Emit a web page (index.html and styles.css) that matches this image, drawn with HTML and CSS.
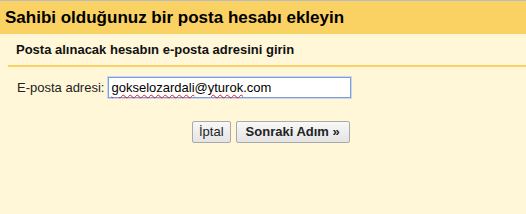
FILE: index.html
```html
<!DOCTYPE html>
<html>
<head>
<meta http-equiv="Content-Type" content="text/html; charset=utf-8" />
<title>Posta hesabı ekle</title>
<link rel="stylesheet" href="styles.css">
</head>
<body>
 <div class="dialog">
  <div class="title">Sahibi olduğunuz bir posta hesabı ekleyin</div>
  <div class="content">
   <div class="subtitle">Posta alınacak hesabın e-posta adresini girin</div>
   <div class="field">
    <span class="label">E-posta adresi:</span>
    <div class="email"><span class="typo">gokselozardali</span>@<span class="typo">yturok</span>.com</div>
   </div>
   <div class="actions">
    <span class="btn">İptal</span>
    <span class="btn primary">Sonraki Adım »</span>
   </div>
  </div>
 </div>
</body>
</html>
```

FILE: styles.css
```css
*{
	margin:0;
	padding:0;
	}
body{
	font-family: "Liberation Sans", Arial, sans-serif;
	font-size: 13px;
	color: #222;
	background: #fff7d7;
	}
.dialog{
	width: 526px;
	height: 214px;
	border-top: 1px solid #b9bcc6;
	background: #fff7d7;
	}
.title{
	background: #fad163;
	font-size: 17px;
	font-weight: bold;
	color: #000;
	line-height: 19px;
	padding: 7px 5px 7px;
	}
.subtitle{
	font-weight: bold;
	color: #111;
	line-height: 16px;
	padding: 8px 0 7px 8px;
	margin-left: 8px;
	border-bottom: 2px solid #fad163;
	}
.field{
	display: flex;
	align-items: center;
	margin-top: 10px;
	padding-left: 17px;
	gap: 4px;
	}
.label{
	color: #222;
	}
.email{
	width: 237px;
	height: 19px;
	line-height: 19px;
	padding: 0 2px;
	border: 1px solid #7d9ed6;
	box-shadow: 0 0 0 1px #c9d7f0;
	background: #fff;
	color: #000;
	}
.typo{
	text-decoration: underline wavy #e02020;
	text-decoration-thickness: 1px;
	text-underline-offset: 2px;
	}
.actions{
	display: flex;
	gap: 5px;
	margin-top: 23px;
	padding-left: 192px;
	}
.btn{
	display: inline-block;
	height: 20px;
	line-height: 20px;
	padding: 0 6px;
	border: 1px solid #a9a9a9;
	border-radius: 2px;
	background: linear-gradient(#f8f8f8, #e4e4e4);
	color: #222;
	cursor: pointer;
	}
.primary{
	font-weight: bold;
	padding: 0 9px;
	}
```
